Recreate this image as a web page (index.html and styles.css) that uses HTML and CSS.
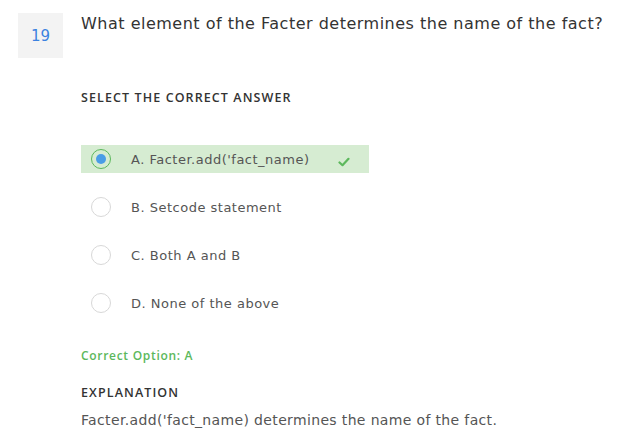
FILE: index.html
```html
<!DOCTYPE html>
<html>
<head>
<meta charset="utf-8">
<link rel="stylesheet" href="styles.css">
</head>
<body>
<div class="question">
  <div class="num">19</div>
  <div class="body">
    <h1 class="title">What element of the Facter determines the name of the fact?</h1>
    <div class="label select-label">SELECT THE CORRECT ANSWER</div>
    <ul class="options">
      <li class="option correct">
        <span class="radio checked"><span class="dot"></span></span>
        <span class="opt-text">A. Facter.add('fact_name)</span>
        <svg class="check" width="12" height="10" viewBox="0 0 12 10"><path d="M1.5 5.5 L4.5 8.2 L10.5 1.8" fill="none" stroke="#5cb85c" stroke-width="2.2" stroke-linecap="round" stroke-linejoin="round"/></svg>
      </li>
      <li class="option">
        <span class="radio"></span>
        <span class="opt-text">B. Setcode statement</span>
      </li>
      <li class="option">
        <span class="radio"></span>
        <span class="opt-text">C. Both A and B</span>
      </li>
      <li class="option">
        <span class="radio"></span>
        <span class="opt-text">D. None of the above</span>
      </li>
    </ul>
    <div class="correct-label">Correct Option: A</div>
    <div class="label expl-label">EXPLANATION</div>
    <p class="expl">Facter.add('fact_name) determines the name of the fact.</p>
  </div>
</div>
</body>
</html>
```
FILE: styles.css
```css
html, body {
  margin: 0;
  padding: 0;
  background: #fff;
}
body {
  font-family: "DejaVu Sans", "Open Sans", sans-serif;
  color: #333;
}
.question {
  display: flex;
  padding: 13px 0 0 18px;
  gap: 18px;
}
.num {
  width: 45px;
  height: 45px;
  flex: none;
  background: #f3f3f3;
  color: #3b82e0;
  font-size: 15px;
  display: flex;
  align-items: center;
  justify-content: center;
}
.body {
  flex: 1;
}
.title {
  margin: 0;
  font-size: 16px;
  font-weight: normal;
  letter-spacing: 0.5px;
  line-height: 22px;
  color: #333;
}
.label {
  font-family: "Open Sans", "DejaVu Sans", sans-serif;
  font-size: 12.5px;
  font-weight: 600;
  letter-spacing: 1.1px;
  color: #333;
  line-height: 14px;
}
.select-label {
  margin-top: 56px;
}
.options {
  list-style: none;
  margin: 40px 0 0 0;
  padding: 0;
  width: 288px;
}
.option {
  display: flex;
  align-items: center;
  height: 28px;
  margin-bottom: 20px;
  font-size: 13px;
  letter-spacing: 0.5px;
  color: #555;
}
.option.correct {
  background: #d6ecd2;
}
.radio {
  width: 18px;
  height: 18px;
  border: 1px solid #d8d8d8;
  border-radius: 50%;
  margin-left: 10px;
  flex: none;
  display: flex;
  align-items: center;
  justify-content: center;
  background: #fff;
}
.radio.checked {
  border-color: #5cb85c;
  background: transparent;
}
.dot {
  width: 10px;
  height: 10px;
  border-radius: 50%;
  background: #4a9de6;
}
.opt-text {
  margin-left: 20px;
}
.check {
  margin-left: 28px;
  margin-top: 6px;
}
.correct-label {
  margin-top: 30px;
  font-family: "Open Sans", "DejaVu Sans", sans-serif;
  font-size: 12px;
  font-weight: 600;
  letter-spacing: 0.7px;
  color: #5cb85c;
}
.expl-label {
  margin-top: 22px;
}
.expl {
  margin: 12px 0 0 0;
  font-size: 14px;
  letter-spacing: 0.35px;
  color: #555;
}
```
